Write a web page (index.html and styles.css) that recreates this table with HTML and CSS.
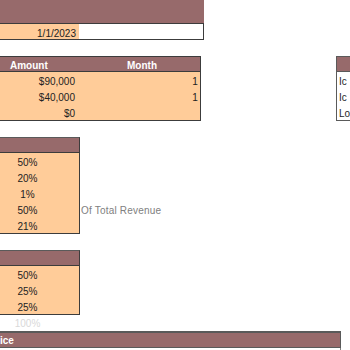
FILE: index.html
```html
<!DOCTYPE html>
<html>
<head>
<meta charset="utf-8">
<link rel="stylesheet" href="styles.css">
</head>
<body>
<div class="sheet">
  <section class="block-top">
    <div class="band"></div>
    <div class="date-row">
      <div class="date-cell">1/1/2023</div>
      <div class="date-blank"></div>
    </div>
  </section>

  <section class="mid">
    <div class="loan">
      <div class="hdr loan-hdr"><span class="h-amt">Amount</span><span class="h-month">Month</span></div>
      <div class="loan-row"><span class="amt">$90,000</span><span class="month">1</span></div>
      <div class="loan-row"><span class="amt">$40,000</span><span class="month">1</span></div>
      <div class="loan-row"><span class="amt">$0</span><span class="month"></span></div>
    </div>
    <div class="side">
      <div class="hdr side-hdr"></div>
      <div class="side-row">Ic</div>
      <div class="side-row">Ic</div>
      <div class="side-row">Lo</div>
    </div>
  </section>

  <section class="pct pct-a">
    <div class="hdr pct-hdr"></div>
    <div class="pct-body">
      <div class="pct-row"><span class="pv">50%</span></div>
      <div class="pct-row"><span class="pv">20%</span></div>
      <div class="pct-row"><span class="pv">1%</span></div>
      <div class="pct-row"><span class="pv">50%</span><span class="note">Of Total Revenue</span></div>
      <div class="pct-row"><span class="pv">21%</span></div>
    </div>
  </section>

  <section class="pct pct-b">
    <div class="hdr pct-hdr"></div>
    <div class="pct-body">
      <div class="pct-row"><span class="pv">50%</span></div>
      <div class="pct-row"><span class="pv">25%</span></div>
      <div class="pct-row"><span class="pv">25%</span></div>
    </div>
    <div class="total-row"><span class="pv">100%</span></div>
  </section>

  <section class="price">
    <div class="hdr price-hdr"><span class="price-t">ice</span></div>
    <div class="price-rest"></div>
  </section>
</div>
</body>
</html>
```

FILE: styles.css
```css
html, body {
  margin: 0;
  padding: 0;
  background: #ffffff;
}
body {
  font-family: "Liberation Sans", Arial, sans-serif;
  font-size: 10px;
  color: #222222;
  width: 350px;
  height: 350px;
  overflow: hidden;
}
.sheet {
  display: flex;
  flex-direction: column;
}
.hdr {
  background: #976a6b;
  color: #ffffff;
  font-weight: bold;
  box-sizing: border-box;
}

/* top block */
.block-top {
  width: 204px;
}
.band {
  height: 23px;
  background: #976a6b;
}
.date-row {
  display: flex;
  height: 17px;
  box-sizing: border-box;
  border-top: 1px solid #3c3c3c;
  border-bottom: 1px solid #3c3c3c;
  border-right: 1px solid #3c3c3c;
}
.date-cell {
  width: 79px;
  background: #ffcc99;
  text-align: right;
  padding-right: 3px;
  box-sizing: border-box;
  line-height: 19px;
}
.date-blank {
  flex: 1;
  background: #ffffff;
}

/* middle tables */
.mid {
  display: flex;
  margin-top: 16px;
}
.loan {
  width: 204px;
  box-sizing: border-box;
  border-right: 1px solid #3c3c3c;
  border-bottom: 1px solid #3c3c3c;
  background: #ffcc99;
}
.loan-hdr {
  height: 16px;
  border-top: 1px solid #3c3c3c;
  border-bottom: 1px solid #3c3c3c;
  position: relative;
  line-height: 17px;
}
.h-amt {
  position: absolute;
  left: 10px;
}
.h-month {
  position: absolute;
  left: 127px;
}
.loan-row {
  display: flex;
  height: 16px;
  line-height: 20px;
}
.amt {
  width: 75px;
  text-align: right;
}
.month {
  flex: 1;
  text-align: right;
  padding-right: 2px;
}
.side {
  margin-left: 135px;
  flex: 1;
  border-left: 1px solid #5a5a5a;
  height: 65px;
  border-bottom: 1px solid #5a5a5a;
  box-sizing: border-box;
}
.side-hdr {
  height: 16px;
  border-top: 1px solid #5a5a5a;
  border-bottom: 1px solid #5a5a5a;
}
.side-row {
  height: 16px;
  line-height: 20px;
  padding-left: 2px;
  color: #1f1f1f;
}

/* percent tables */
.pct {
  width: 80px;
}
.pct-a {
  margin-top: 16px;
}
.pct-b {
  margin-top: 16px;
}
.pct-hdr {
  height: 16px;
  border-top: 1px solid #5a5a5a;
  border-right: 1px solid #3c3c3c;
  border-bottom: 1px solid #3c3c3c;
}
.pct-body {
  background: #ffcc99;
  border-right: 1px solid #3c3c3c;
  border-bottom: 1px solid #3c3c3c;
}
.pct-row {
  height: 16px;
  line-height: 20px;
  position: relative;
}
.pv {
  display: inline-block;
  width: 55px;
  text-align: center;
}
.note {
  position: absolute;
  left: 81px;
  top: 0;
  white-space: nowrap;
  color: #808080;
  letter-spacing: 0.2px;
}
.total-row {
  height: 16px;
  line-height: 17px;
  color: #d9d9d9;
}

/* price */
.price {
  width: 341px;
}
.price-hdr {
  height: 17px;
  border-top: 2px solid #5a5a5a;
  border-right: 1px solid #5a5a5a;
  border-bottom: 1px solid #5a5a5a;
  line-height: 15px;
}
.price-rest {
  height: 10px;
  border-right: 1px solid #808080;
}
```
